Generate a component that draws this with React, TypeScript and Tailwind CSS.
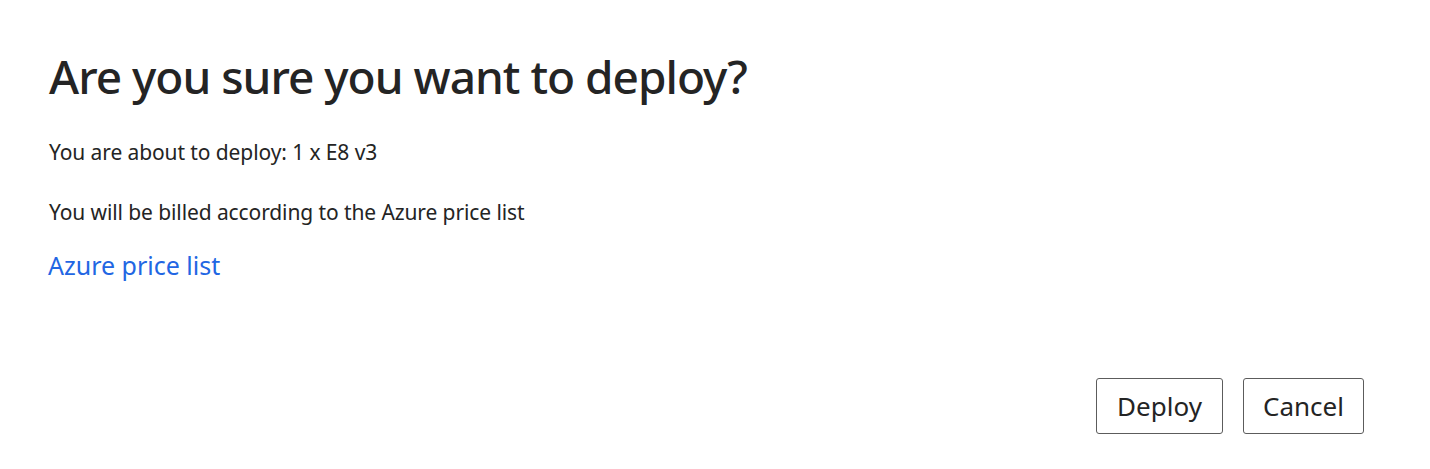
export default function App() {
  return (
    <div
      className="w-[1430px] h-[469px] bg-white text-[#242424] flex flex-col pl-[49px] pr-[66px]"
      style={{ fontFamily: '"Noto Sans", "Open Sans", sans-serif' }}
    >
      <h1 className="mt-[48px] text-[46px] leading-[56px] font-medium tracking-[-1px]">
        Are you sure you want to deploy?
      </h1>
      <p className="mt-[34px] text-[21px] leading-[28px] tracking-[-0.1px]">
        You are about to deploy: 1 x E8 v3
      </p>
      <p className="mt-[32px] text-[21px] leading-[28px] tracking-[-0.1px]">
        You will be billed according to the Azure price list
      </p>
      <a
        href="#"
        className="mt-[23px] -ml-px text-[25px] leading-[32px] text-[#2266e3] w-fit"
      >
        Azure price list
      </a>
      <div className="mt-auto mb-[35px] flex justify-end gap-[20px]">
        <button
          type="button"
          className="w-[127px] h-[56px] border-[1.5px] border-[#5c5c5c] rounded-[3px] text-[26px] bg-white"
        >
          Deploy
        </button>
        <button
          type="button"
          className="w-[121px] h-[56px] border-[1.5px] border-[#5c5c5c] rounded-[3px] text-[26px] bg-white"
        >
          Cancel
        </button>
      </div>
    </div>
  );
}
